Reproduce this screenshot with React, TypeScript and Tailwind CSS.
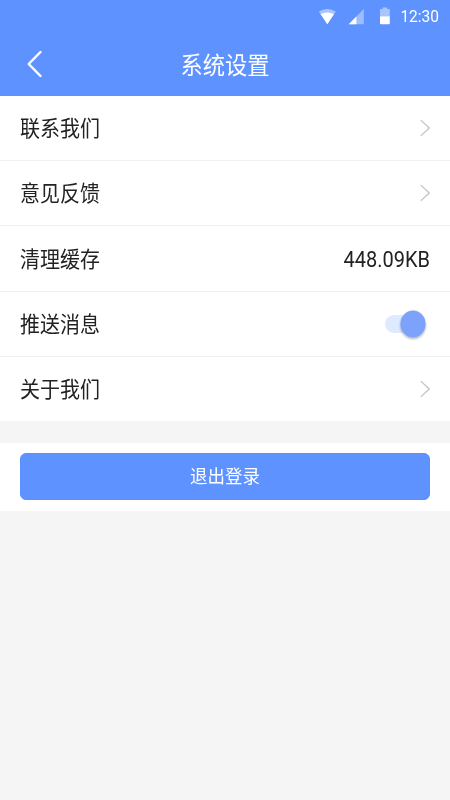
import React from "react";

const sans = "font-['Roboto','Noto_Sans_CJK_SC',sans-serif]";

function Chevron() {
  return (
    <svg width="10" height="18" viewBox="0 0 10 18" fill="none" stroke="#c4c4c4" strokeWidth="1.3">
      <path d="M0.8 1.1 L9.2 9 L0.8 16.9" />
    </svg>
  );
}

function Toggle() {
  return (
    <svg width="46" height="34" viewBox="0 0 46 34" fill="none">
      <defs>
        <filter id="knob" x="-30%" y="-30%" width="160%" height="160%">
          <feDropShadow dx="0" dy="1.3" stdDeviation="0.9" floodColor="#000" floodOpacity="0.35" />
        </filter>
      </defs>
      <rect x="1" y="8" width="36" height="18" rx="9" fill="#dfe9ff" />
      <ellipse cx="29" cy="17" rx="12.6" ry="13.4" fill="#7ba2fb" filter="url(#knob)" />
    </svg>
  );
}

function Row({ label, height, last, children }: { label: string; height: string; last?: boolean; children: React.ReactNode }) {
  return (
    <div className={`flex items-center justify-between bg-white pl-5 pr-5 ${height} ${last ? "" : "border-b border-[#efefef]"}`}>
      <span className="mt-[2px] origin-center scale-y-[1.067] text-[20px] leading-[30px] text-[#222]">{label}</span>
      {children}
    </div>
  );
}

export default function App() {
  return (
    <div className={`flex h-[800px] w-[450px] flex-col overflow-hidden bg-[#f5f5f5] ${sans}`}>
      <header className="h-24 bg-[#5e92ff] text-white">
        <div className="flex h-8 items-center justify-end pr-[11px]">
          <svg width="76" height="20" viewBox="0 0 76 20" className="mr-[6px]">
            <path d="M0.8 5.6 Q9.3 0.4 17.8 5.6 L9.3 18.2 Z" fill="#a9c5ff" />
            <path d="M2.6 8 Q9.3 4.8 16 8 L9.3 18.2 Z" fill="#fff" />
            <path d="M45.8 3 V18.2 H30.8 Z" fill="#9dbdff" />
            <path d="M38.4 10.5 V18.2 H30.8 Z" fill="#fff" />
            <path d="M64.7 1.6 h4.4 v1.4 h2.7 v7.2 h-9.8 v-7.2 h2.7 Z" fill="#a9c5ff" />
            <path d="M62 10.2 h9.8 v7.1 q0 1 -1 1 h-7.8 q-1 0 -1 -1 Z" fill="#fff" />
          </svg>
          <span className="mt-[2px] scale-y-[1.067] text-[15.5px] leading-5">12:30</span>
        </div>
        <div className="grid h-16 grid-cols-[60px_1fr_60px] items-center">
          <svg width="20" height="32" viewBox="0 0 20 32" fill="none" stroke="#fff" strokeWidth="2.4" strokeLinecap="round" strokeLinejoin="round" className="ml-[25px]">
            <path d="M15.5 4 L3.7 16 L15.5 28" />
          </svg>
          <h1 className="mt-[2px] scale-y-[1.067] text-center text-[22.3px] font-normal leading-8">系统设置</h1>
        </div>
      </header>

      <Row label="联系我们" height="h-[65px]"><Chevron /></Row>
      <Row label="意见反馈" height="h-[65px]"><Chevron /></Row>
      <Row label="清理缓存" height="h-[66px]">
        <span className="mt-[2px] scale-y-[1.067] text-[20px] leading-[30px] text-[#222]">448.09KB</span>
      </Row>
      <Row label="推送消息" height="h-[65px]"><Toggle /></Row>
      <Row label="关于我们" height="h-16" last><Chevron /></Row>

      <div className="mt-[22px] h-[68px] bg-white px-5 pt-[10px]">
        <button className="flex h-[47px] w-full items-center justify-center rounded-[6px] border border-[#5a8ffe] bg-[#5e92ff] text-white">
          <span className="mt-px scale-y-[1.067] text-[17.5px] leading-6">退出登录</span>
        </button>
      </div>
    </div>
  );
}
